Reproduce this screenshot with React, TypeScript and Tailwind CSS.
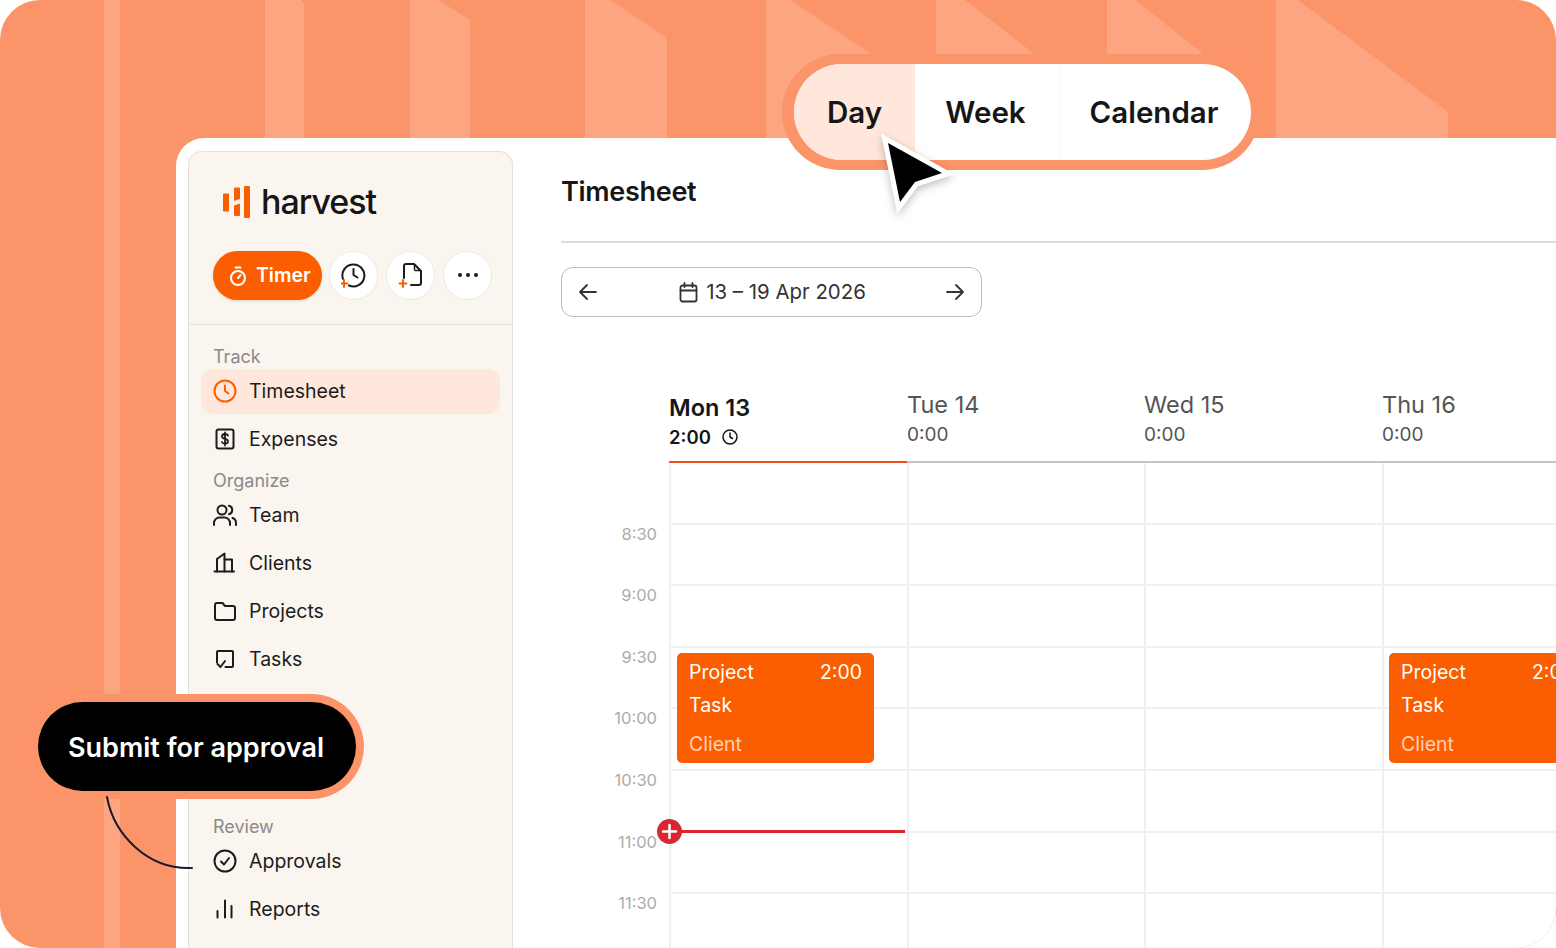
import { ReactNode } from "react";

const ink = "#1c1c1c";

const Icon = ({ children, size = 24 }: { children: ReactNode; size?: number }) => (
  <svg
    width={size}
    height={size}
    viewBox="0 0 24 24"
    fill="none"
    stroke="currentColor"
    strokeWidth="2"
    strokeLinecap="round"
    strokeLinejoin="round"
    className="shrink-0"
  >
    {children}
  </svg>
);

const ClockIcon = () => (
  <Icon>
    <circle cx="12" cy="12" r="10.5" />
    <path d="M12 6.5V12l3.5 2.5" />
  </Icon>
);

const ExpenseIcon = () => (
  <Icon>
    <rect x="3.5" y="2.5" width="17" height="19" rx="2" />
    <path d="M15 8.5c-.5-1-1.6-1.5-3-1.5-1.700 0-3 .8-3 2.400 0 3.200 6 1.600 6 4.900 0 1.500-1.300 2.400-3 2.400-1.500 0-2.600-.6-3.100-1.700M12 5.500v13" strokeWidth="1.800" />
  </Icon>
);

const TeamIcon = () => (
  <Icon>
    <circle cx="9" cy="7" r="4.500" />
    <path d="M1 22v-2c0-3 2.500-5.500 5.500-5.500h5c3 0 5.500 2.500 5.500 5.500v2" />
    <path d="M16 2.800c2 .5 3.200 2.200 3.200 4.200s-1.200 3.700-3.200 4.200" />
    <path d="M19.500 15c2.200.7 3.500 2.600 3.500 5v2" />
  </Icon>
);

const ClientsIcon = () => (
  <Icon>
    <path d="M1.500 20.500h19.500" />
    <path d="M4 20.500V8l7.500-5.500v18" />
    <path d="M11.500 8.500H19v12" />
  </Icon>
);

const FolderIcon = () => (
  <Icon>
    <path d="M2 6a2 2 0 0 1 2-2h5.500l2.500 3h8a2 2 0 0 1 2 2v10a2 2 0 0 1-2 2H4a2 2 0 0 1-2-2z" />
  </Icon>
);

const TasksIcon = () => (
  <Icon>
    <path d="M4 15.500V5a1 1 0 0 1 1-1h14a1 1 0 0 1 1 1v14a1 1 0 0 1-1 1h-6.500" />
    <path d="M4.500 17l3 3 4.500-6" />
  </Icon>
);

const ApprovalIcon = () => (
  <Icon>
    <circle cx="12" cy="12" r="10.500" />
    <path d="M8 12.500l3 3 5-6.500" />
  </Icon>
);

const ReportsIcon = () => (
  <Icon>
    <path d="M4.500 14v6.500M12 3.500v17M18.500 9v11.500" />
  </Icon>
);

const Logo = () => (
  <svg width="30" height="33" viewBox="0 0 30 33" className="shrink-0">
    <g fill="#fb5e00">
      <rect x="1" y="7.500" width="6" height="18" rx="1" />
      <path d="M12 2.500a1 1 0 0 1 1-1h4a1 1 0 0 1 1 1v10.500l-6 2z" />
      <path d="M12 19.500l6-2v11.500a1 1 0 0 1-1 1h-4a1 1 0 0 1-1-1z" />
      <rect x="22" y="0" width="6" height="32" rx="1" />
    </g>
  </svg>
);

type NavItem = { label: string; icon: ReactNode; active?: boolean };

const NavRow = ({ label, icon, active }: NavItem) => (
  <div
    className={`flex h-[45px] items-center gap-[12px] rounded-[12px] pl-[12px] text-[19.500px] leading-none ${
      active ? "bg-[#ffe8db]" : ""
    }`}
  >
    <span className={`-mt-[1px] ${active ? "text-[#fb5e00]" : "text-[#1c1c1c]"}`}>{icon}</span>
    <span className="text-[#1c1c1c]">{label}</span>
  </div>
);

const NavLabel = ({ children }: { children: ReactNode }) => (
  <div className="h-[24px] pl-[12px] text-[18px] leading-[24px] text-[#8a8a8a]">{children}</div>
);

const Sidebar = () => (
  <aside className="mt-[13px] ml-[12px] flex h-[900px] w-[325px] shrink-0 flex-col rounded-t-[14px] border border-b-0 border-[#e6e1db] bg-[#faf5ef]">
    <div className="h-[173px] border-b border-[#e6e1db] pl-[33px]">
      <div className="flex items-center gap-[9px] pt-[34px]">
        <Logo />
        <span className="-mt-[2px] text-[34px] leading-[33px] font-medium tracking-[-1px] text-[#161616]">harvest</span>
      </div>
      <div className="mt-[32px] -ml-[9px] flex items-center gap-[7px]">
        <div className="flex h-[49px] w-[109px] items-center gap-[9px] rounded-full bg-[#fb5e00] pl-[16px] text-[19.500px] font-semibold text-white shadow-[0_1px_3px_rgba(0,0,0,0.12)]">
          <svg width="18" height="20" viewBox="0 0 18 20" fill="none" stroke="currentColor" strokeWidth="2" strokeLinecap="round">
            <circle cx="9" cy="12" r="7" />
            <path d="M6.500 1.500h5M9 12l2.500-3" />
          </svg>
          Timer
        </div>
        <div className="flex h-[49px] w-[49px] items-center justify-center rounded-full border border-[#eeeae5] bg-white">
          <svg width="26" height="26" viewBox="1.500 1 26 26" fill="none" strokeLinecap="round" strokeLinejoin="round">
            <path d="M3.500 17a11 11 0 1 1 6 6.500" stroke="#1c1c1c" strokeWidth="2" />
            <path d="M14 7v6l4 2.500" stroke="#1c1c1c" strokeWidth="2" />
            <path d="M4.500 18v7M1 21.500h7" stroke="#fb5e00" strokeWidth="2" />
          </svg>
        </div>
        <div className="ml-[1px] flex h-[49px] w-[49px] items-center justify-center rounded-full border border-[#eeeae5] bg-white">
          <svg width="26" height="26" viewBox="0 1 26 26" fill="none" strokeLinecap="round" strokeLinejoin="round">
            <path d="M6 16V4a2 2 0 0 1 2-2h8l7 7v12a2 2 0 0 1-2 2h-8" stroke="#1c1c1c" strokeWidth="2" />
            <path d="M16.500 2.500v5a1 1 0 0 0 1 1h5" stroke="#1c1c1c" strokeWidth="1.500" />
            <path d="M5 18v7M1.500 21.500h7" stroke="#fb5e00" strokeWidth="2" />
          </svg>
        </div>
        <div className="ml-[1px] flex h-[49px] w-[49px] items-center justify-center gap-[4px] rounded-full border border-[#eeeae5] bg-white pb-[1px]">
          <span className="h-[4px] w-[4px] rounded-full bg-[#1c1c1c]" />
          <span className="h-[4px] w-[4px] rounded-full bg-[#1c1c1c]" />
          <span className="h-[4px] w-[4px] rounded-full bg-[#1c1c1c]" />
        </div>
      </div>
    </div>
    <nav className="flex flex-col px-[12px] pt-[20px]">
      <NavLabel>Track</NavLabel>
      <div className="flex flex-col gap-[3px]">
        <NavRow label="Timesheet" icon={<ClockIcon />} active />
        <NavRow label="Expenses" icon={<ExpenseIcon />} />
      </div>
      <div className="h-[7px]" />
      <NavLabel>Organize</NavLabel>
      <div className="flex flex-col gap-[3px]">
        <NavRow label="Team" icon={<TeamIcon />} />
        <NavRow label="Clients" icon={<ClientsIcon />} />
        <NavRow label="Projects" icon={<FolderIcon />} />
        <NavRow label="Tasks" icon={<TasksIcon />} />
      </div>
      <div className="h-[133px]" />
      <NavLabel>Review</NavLabel>
      <div className="flex flex-col gap-[3px]">
        <NavRow label="Approvals" icon={<ApprovalIcon />} />
        <NavRow label="Reports" icon={<ReportsIcon />} />
      </div>
    </nav>
  </aside>
);

const times = ["", "8:30", "9:00", "9:30", "10:00", "10:30", "11:00", "11:30"];
const colWidths = ["w-[238px]", "w-[237px]", "w-[238px]", "w-[238px]"];

const days = [
  { day: "Mon 13", total: "2:00", current: true },
  { day: "Tue 14", total: "0:00" },
  { day: "Wed 15", total: "0:00" },
  { day: "Thu 16", total: "0:00" },
];

const EventCard = ({ className }: { className: string }) => (
  <div className={`absolute top-[190px] flex h-[110px] flex-col rounded-[5px] bg-[#fb5e00] px-[12px] pt-[6px] text-[19.500px] leading-[26px] text-white ${className}`}>
    <div className="flex justify-between">
      <span>Project</span>
      <span>2:00</span>
    </div>
    <div className="mt-[7px]">Task</div>
    <div className="mt-[13px] text-[#ffd0b5]">Client</div>
  </div>
);

const Calendar = () => (
  <div className="mt-[74px]">
    <div className="flex h-[72px] pl-[108px]">
      {days.map((d, i) => (
        <div
          key={d.day}
          className={`${colWidths[i]} shrink-0 border-b-2 ${d.current ? "border-[#f0501a] text-[#161616]" : "border-[#c4c4c4] text-[#555555]"}`}
        >
          <div className={`leading-[28px] ${d.current ? "mt-[3px] text-[23.500px] font-semibold" : "mt-0 text-[23.500px]"}`}>{d.day}</div>
          <div className={`flex items-center gap-[11px] leading-[24px] ${d.current ? "mt-[3px] text-[18.500px] font-semibold" : "mt-[4px] text-[19px]"}`}>
            {d.total}
            {d.current && (
              <svg width="16" height="16" viewBox="0 0 16 16" fill="none" stroke="currentColor" strokeWidth="1.500" strokeLinecap="round">
                <circle cx="8" cy="8" r="7" />
                <path d="M8 4v4l2.500 1.500" />
              </svg>
            )}
          </div>
        </div>
      ))}
      <div className="flex-1 border-b-2 border-[#c4c4c4]" />
    </div>
    <div className="relative">
      {times.map((t, r) => (
        <div key={r} className={`flex ${r === 0 ? "h-[59.600px]" : "h-[61.600px]"}`}>
          <div className="w-[96px] shrink-0 text-right text-[16.500px] leading-[22px] text-[#acacac]">{t}</div>
          <div className="w-[12px] shrink-0" />
          {colWidths.map((w, i) => (
            <div key={i} className={`${w} shrink-0 border-l-2 border-[#f0f0f0] ${r > 0 ? "border-t-2" : ""}`} />
          ))}
          <div className={`w-[100px] shrink-0 border-l-2 border-[#f0f0f0] ${r > 0 ? "border-t-2" : ""}`} />
        </div>
      ))}
      <EventCard className="left-[116px] w-[197px]" />
      <EventCard className="left-[828px] w-[197px]" />
      <div className="absolute top-[367px] left-[108px] h-[3px] w-[236px] bg-[#dc2430]" />
      <div className="absolute top-[356px] left-[96px] flex h-[25px] w-[25px] items-center justify-center rounded-full bg-[#d9262f]">
        <svg width="17" height="17" viewBox="0 0 17 17" stroke="white" strokeWidth="2.500" strokeLinecap="round">
          <path d="M8.500 2v13M2 8.500h13" />
        </svg>
      </div>
    </div>
  </div>
);

const MainPanel = () => (
  <main className="min-w-0 flex-1 pt-[40px] pl-[48px]">
    <h1 className="h-[27px] text-[27px] leading-[27px] font-semibold tracking-[-0.3px] text-[#161616]">Timesheet</h1>
    <div className="mt-[36px] h-[2px] bg-[#dcdcdc]" />
    <div className="mt-[24px] flex h-[50px] w-[421px] items-center justify-between rounded-[12px] border-[1.500px] border-[#bdbdbd] px-[15px] text-[#333333]">
      <svg width="22" height="22" viewBox="0 0 22 22" fill="none" stroke="currentColor" strokeWidth="1.800" strokeLinecap="round" strokeLinejoin="round">
        <path d="M19 11H3M10 4l-7 7 7 7" />
      </svg>
      <div className="ml-[2px] flex items-center gap-[8px] text-[20.400px] leading-none">
        <svg width="19" height="21" viewBox="0 0 19 21" fill="none" stroke="currentColor" strokeWidth="1.800" strokeLinecap="round" strokeLinejoin="round">
          <rect x="1.500" y="3.500" width="16" height="16" rx="2" />
          <path d="M1.500 8.500h16M5.500 1v4M13.500 1v4" />
        </svg>
        13 – 19 Apr 2026
      </div>
      <svg width="22" height="22" viewBox="0 0 22 22" fill="none" stroke="currentColor" strokeWidth="1.800" strokeLinecap="round" strokeLinejoin="round">
        <path d="M3 11h16M12 4l7 7-7 7" />
      </svg>
    </div>
    <Calendar />
  </main>
);

const Stripes = () => (
  <svg width="1556" height="948" viewBox="0 0 1556 948" className="absolute inset-0">
    <g fill="#fda480">
      <rect x="104" y="0" width="16" height="948" />
      <path d="M265 0H301L304 3V140H265Z" />
      <path d="M410 0H438L470 20V140H410Z" />
      <path d="M585 0H610L667 38V140H585Z" />
      <path d="M766 0H790L880 60V140H766Z" />
      <path d="M936 0H965L1033 53V140H936Z" />
      <path d="M1107 0H1135L1202 53V140H1107Z" />
      <path d="M1276 0H1298L1448 112V140H1276Z" />
    </g>
  </svg>
);

const ViewSwitcher = () => (
  <div className="absolute top-[54px] left-[782px] rounded-full bg-[#fc9469] pt-[10px] pr-[9px] pb-[10px] pl-[12px]">
    <div className="flex h-[96px] w-[457px] overflow-hidden rounded-full bg-white text-[29.500px] leading-none font-semibold text-[#161616]">
      <div className="flex w-[121px] items-center justify-center bg-[#ffe8db] pt-[2px]">Day</div>
      <div className="flex w-[145px] items-center justify-center border-r border-[#f6f6f6] pt-[2px] pr-[3px]">Week</div>
      <div className="flex flex-1 items-center justify-center pt-[2px] pr-[3px]">Calendar</div>
    </div>
  </div>
);

const Cursor = () => (
  <svg width="90" height="100" viewBox="0 0 90 100" className="absolute top-[130px] left-[878px] drop-shadow-[0_3px_4px_rgba(0,0,0,0.25)]">
    <path d="M10 13L64 43L37 52L22 72Z" fill="#000" stroke="#fff" strokeWidth="10" strokeLinejoin="miter" paintOrder="stroke" />
  </svg>
);

const SubmitCallout = () => (
  <>
    <div className="absolute top-[694px] left-[30px] rounded-full bg-[#fc9469] p-[8px]">
      <div className="flex h-[89px] w-[318px] items-center justify-center rounded-full bg-black pt-[2px] pr-[2px] text-[27px] leading-none font-semibold text-white">
        Submit for approval
      </div>
    </div>
    <svg width="100" height="90" viewBox="0 0 100 90" fill="none" className="absolute top-[790px] left-[100px]">
      <path d="M7 7C14 45 48 80 92 78" stroke="#1a1a2e" strokeWidth="2" strokeLinecap="round" />
    </svg>
  </>
);

export default function App() {
  return (
    <div className="h-[948px] w-[1556px] bg-white font-['Inter',sans-serif]" style={{ color: ink }}>
      <div className="relative h-full w-full overflow-hidden rounded-[40px] bg-[#fc9469]">
        <Stripes />
        <div className="relative flex h-full pt-[138px] pl-[176px]">
          <div className="flex min-w-0 flex-1 overflow-hidden rounded-tl-[28px] bg-white">
            <Sidebar />
            <MainPanel />
          </div>
        </div>
        <ViewSwitcher />
        <Cursor />
        <SubmitCallout />
      </div>
    </div>
  );
}
